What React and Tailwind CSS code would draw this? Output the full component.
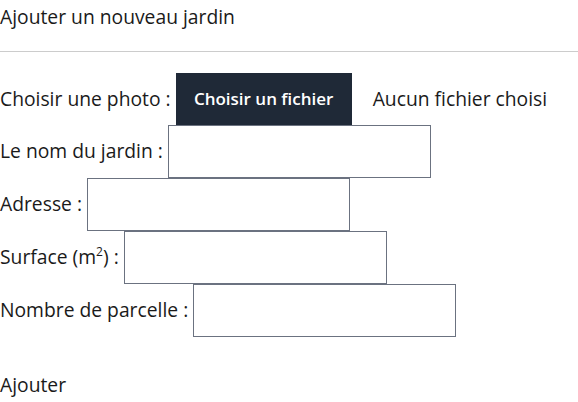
import React from 'react';

const fields = [
  { label: 'Le nom du jardin :' },
  { label: 'Adresse :' },
  { label: <>Surface (m<sup className="text-[12px] -top-[0.7em]">2</sup>) :</> },
  { label: 'Nombre de parcelle :' },
];

export default function App() {
  return (
    <div className="w-[578px] h-[402px] bg-white text-[#1a1a1a] text-[19.3px] font-['Open_Sans',sans-serif] overflow-hidden">
      <div className="h-[51px] pt-[3px] leading-[28px]">Ajouter un nouveau jardin</div>
      <hr className="border-0 border-t border-[#cccccc]" />
      <form className="pt-[21px]">
        {/* Photo */}
        <div className="flex items-center h-[52px]">
          <span>Choisir une photo :</span>
          <span className="ml-[5px] h-[52px] w-[176px] bg-[#1f2937] text-white text-[17px] font-semibold flex items-center justify-center">
            Choisir un fichier
          </span>
          <span className="ml-[21px]">Aucun fichier choisi</span>
        </div>

        {fields.map((f, i) => (
          <div key={i} className="flex items-center h-[53px]">
            <label>{f.label}</label>
            <input type="text" className="ml-[5px] w-[263px] h-[53px] border border-[#6b7280] bg-white outline-none" />
          </div>
        ))}

        <button type="button" className="mt-[34px] leading-[28px]">Ajouter</button>
      </form>
    </div>
  );
}
